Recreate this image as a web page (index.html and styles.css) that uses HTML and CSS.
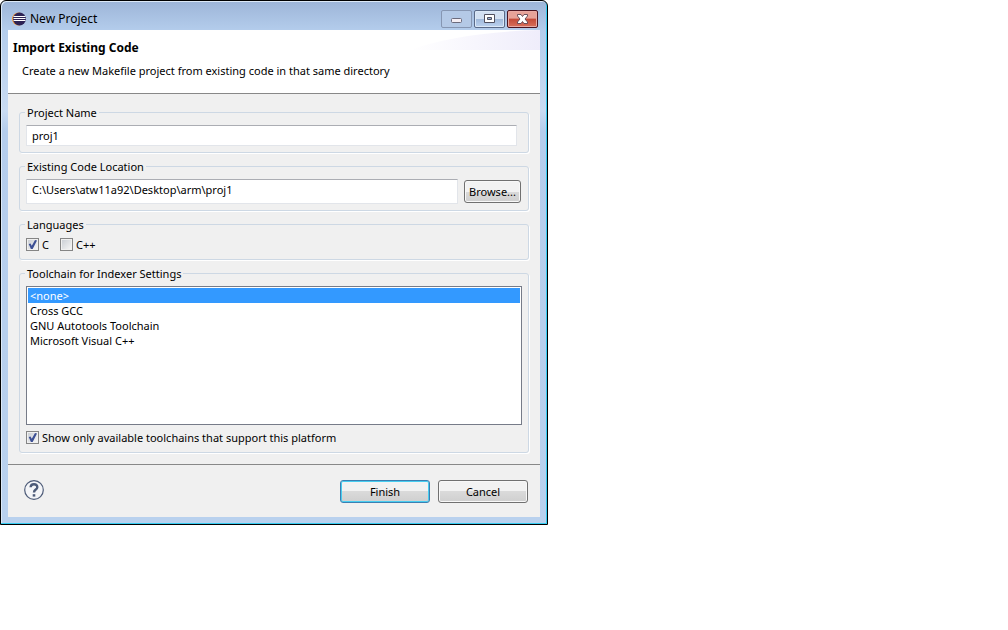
FILE: index.html
```html
<!DOCTYPE html>
<html lang="en">
<head>
  <meta charset="UTF-8">
  <title>New Project</title>
  <link rel="stylesheet" href="styles.css">
</head>
<body>

<form class="window">
  <div class="titlebar">
    <svg class="logo" width="14" height="14" viewBox="0 0 14 14">
      <circle cx="6.5" cy="7" r="6.5" fill="#f09030"/>
      <circle cx="7.5" cy="7" r="6.5" fill="#2c2255"/>
      <path d="M1.5 4.5h12M1.5 6.5h12M1.5 8.5h12" stroke="#fff" stroke-width="1"/>
    </svg>
    <span class="title">New Project</span>
    <div class="controls">
      <button type="button" class="control minimize" aria-label="Minimize">
        <svg width="13" height="10" viewBox="0 0 13 10"><rect x="1.5" y="4.5" width="10" height="4" rx="1" fill="#f4eef4" stroke="#6b6b7c"/></svg>
      </button>
      <button type="button" class="control" aria-label="Maximize">
        <svg width="13" height="10" viewBox="0 0 13 10"><path d="M1.5 0.5h10v8h-10z" fill="#fff" stroke="#50505f"/><path d="M4.500 3.500h4v2h-4z" fill="#9cb4d8" stroke="#50505f"/></svg>
      </button>
      <button type="button" class="control close" aria-label="Close">
        <svg width="13" height="10" viewBox="0 0 13 10"><path d="M1.5 0.5H5L6.5 2.5 8 0.5h3.5v1.5L9 5l2.5 3v1.5H8L6.5 7.5 5 9.5H1.5V8L4 5 1.5 2z" fill="#fff" stroke="#5c4450" stroke-width="0.9"/></svg>
      </button>
    </div>
  </div>

  <div class="content">
    <div class="header">
      <h1>Import Existing Code</h1>
      <p>Create a new Makefile project from existing code in that same directory</p>
      <svg class="swoosh" width="130" height="20" viewBox="0 0 130 20">
        <defs>
          <linearGradient id="fade">
            <stop offset="0" stop-color="#fff"/>
            <stop offset="1" stop-color="#efedfb"/>
          </linearGradient>
        </defs>
        <path d="M0 20Q50 2 130 0v20z" fill="url(#fade)"/>
      </svg>
    </div>

    <div class="groups">
      <fieldset>
        <legend><label for="name">Project Name</label></legend>
        <div class="row name-row">
          <input type="text" id="name" value="proj1">
        </div>
      </fieldset>

      <fieldset>
        <legend><label for="location">Existing Code Location</label></legend>
        <div class="row">
          <input type="text" id="location" class="location" value="C:\Users\atw11a92\Desktop\arm\proj1">
          <button type="button" class="browse">Browse...</button>
        </div>
      </fieldset>

      <fieldset>
        <legend>Languages</legend>
        <div class="checks">
          <label><input type="checkbox" checked>C</label>
          <label><input type="checkbox">C++</label>
        </div>
      </fieldset>

      <fieldset>
        <legend><label for="toolchain">Toolchain for Indexer Settings</label></legend>
        <select id="toolchain" size="9">
          <option selected>&lt;none&gt;</option>
          <option>Cross GCC</option>
          <option>GNU Autotools Toolchain</option>
          <option>Microsoft Visual C++</option>
        </select>
        <div class="checks">
          <label><input type="checkbox" checked>Show only available toolchains that support this platform</label>
        </div>
      </fieldset>
    </div>

    <div class="footer">
      <button type="button" class="help" aria-label="Help">
        <svg width="20" height="20" viewBox="0 0 20 20" fill="none" stroke="#4d5b78">
          <circle cx="10" cy="10" r="9.3" fill="#f4f5f8" stroke-width="1.2"/>
          <path d="M6.6 7.3C6.8 3 13.5 3.3 13.3 7.3 13.2 9.7 10 9.5 10 12.5" stroke-width="2.4"/>
          <path d="M10 14.2v2.4" stroke-width="2.6"/>
        </svg>
      </button>
      <button type="button" class="action default">Finish</button>
      <button type="button" class="action">Cancel</button>
    </div>
  </div>
</form>

</body>
</html>
```

FILE: styles.css
```css
* {
  box-sizing: border-box;
}

body {
  margin: 0;
  background-color: #fff;
  color: #000;
  font-family: "Noto Sans", "Open Sans", sans-serif;
  font-size: 11px;
  line-height: 15px;
}

button, input, select {
  margin: 0;
  color: #000;
  font: inherit;
}

.window {
  max-width: 548px;
  padding: 0 7px;
  border: 1px solid #000;
  border-radius: 6px 6px 0 0;
  background: linear-gradient(#9db5d8, #b4cdec 30px, #c9dbf2 110px, #b5cdec 130px, #b9d1ee);
  box-shadow: inset -1px -1px 0 #35cdf2, inset 1px 1px 0 #dce9f7;
  padding-bottom: 7px;
}

/* Title bar */
.titlebar {
  display: flex;
  align-items: center;
  height: 29px;
  padding: 6px 2px 0 4px;
}

.title {
  margin-left: 4px;
  font-size: 12px;
}

.controls {
  display: flex;
  gap: 2px;
  height: 18px;
  margin-left: auto;
}

.control {
  display: flex;
  align-items: center;
  justify-content: center;
  width: 31px;
  padding: 0;
  border: 1px solid #5a6a88;
  border-radius: 2px;
  background: linear-gradient(#d2e0f2 50%, #9fb8da 50%, #bdd3ef);
  box-shadow: inset 0 0 0 1px #dbe8f7;
}

.minimize {
  border-color: #8696b2;
  background: #b4c9e6;
  box-shadow: none;
}

.close {
  border-color: #4a1420;
  background: linear-gradient(#e6a298 45%, #c34a38 50%, #d8705c);
  box-shadow: inset 0 0 0 1px #e8aaa4;
}

/* Wizard header */
.content {
  background-color: #f0f0f0;
}

.header {
  position: relative;
  height: 64px;
  padding: 10px 5px;
  border-bottom: 1px solid #888;
  background-color: #fff;
}

h1 {
  margin: 0;
  font-size: 12px;
  line-height: 15px;
}

p {
  margin: 8px 9px;
}

.swoosh {
  position: absolute;
  top: 0;
  right: 0;
}

/* Groups */
.groups {
  display: flex;
  flex-direction: column;
  gap: 6px;
  padding: 11px;
}

fieldset {
  min-width: 0;
  margin: 0;
  padding: 5px 6px 6px;
  border: 1px solid #cdd8e4;
  border-radius: 3px;
  box-shadow: 1px 1px 0 #fff;
}

legend {
  margin-left: -1px;
  padding: 0 2px;
}

.row {
  display: flex;
  align-items: center;
  gap: 6px;
  padding-right: 1px;
}

.name-row {
  padding-right: 5px;
}

input[type="text"] {
  flex: 1;
  min-width: 0;
  height: 21px;
  padding: 0 5px;
  border: 1px solid #e2e5ea;
  border-top-color: #abadb3;
  background-color: #fff;
}

input.location {
  height: 25px;
  padding-bottom: 4px;
}

.browse, .action {
  height: 23px;
  padding: 0;
  border: 1px solid #707070;
  border-radius: 3px;
  background: linear-gradient(#f2f2f2 50%, #dadada 50%, #cfcfcf);
  box-shadow: inset 0 0 0 1px #f8f8f8;
}

.browse {
  width: 57px;
}

.checks {
  display: flex;
  gap: 11px;
  padding-bottom: 1px;
}

.checks label {
  display: flex;
  align-items: center;
  gap: 3px;
}

input[type="checkbox"] {
  appearance: none;
  width: 13px;
  height: 13px;
  padding: 1px;
  border: 1px solid #858585;
  background: linear-gradient(135deg, #ccd0d6, #f4f4f4) content-box #f8f8f8;
}

input[type="checkbox"]:checked::before {
  content: "";
  display: block;
  height: 9px;
  background-color: #3c4f94;
  clip-path: polygon(8% 45%, 28% 40%, 42% 65%, 78% 0, 100% 5%, 52% 100%, 32% 100%);
}

select {
  display: block;
  width: 100%;
  height: 139px;
  margin-bottom: 5px;
  padding: 1px;
  border: 1px solid #767b88;
  border-radius: 0;
  background-color: #fff;
  overflow: auto;
}

option {
  min-height: 15px;
  padding: 0 2px;
}

option:checked {
  background: linear-gradient(#3399ff, #3399ff);
  color: #fff;
}

/* Footer */
.footer {
  display: flex;
  align-items: center;
  gap: 8px;
  padding: 15px 12px 14px 16px;
  border-top: 1px solid #888;
}

.help {
  display: flex;
  margin-right: auto;
  padding: 0 0 3px;
  border: 0;
  background: none;
}

.action {
  width: 90px;
}

.default {
  border-color: #3c7fb1;
  box-shadow: inset 0 0 0 1px #48cdf0;
}
```
